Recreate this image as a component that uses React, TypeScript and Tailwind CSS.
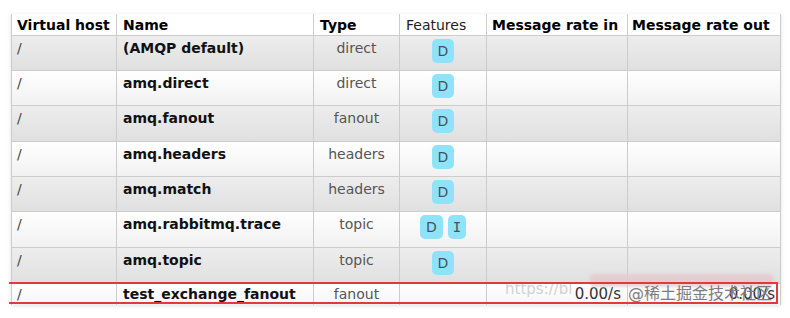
import React from "react";

type Exchange = {
  vhost: string;
  name: string;
  type: string;
  features: string[];
};

const exchanges: Exchange[] = [
  { vhost: "/", name: "(AMQP default)", type: "direct", features: ["D"] },
  { vhost: "/", name: "amq.direct", type: "direct", features: ["D"] },
  { vhost: "/", name: "amq.fanout", type: "fanout", features: ["D"] },
  { vhost: "/", name: "amq.headers", type: "headers", features: ["D"] },
  { vhost: "/", name: "amq.match", type: "headers", features: ["D"] },
  { vhost: "/", name: "amq.rabbitmq.trace", type: "topic", features: ["D", "I"] },
  { vhost: "/", name: "amq.topic", type: "topic", features: ["D"] },
];

// row heights taken from the screenshot (it is scaled a touch, so they drift 35/36)
const rowHeights = ["h-[35px]", "h-[35px]", "h-[36px]", "h-[35px]", "h-[35px]", "h-[36px]", "h-[36px]"];

const cols = "grid grid-cols-[105px_197px_86px_87px_141px_154px]";
const cell = "border-l border-[#cccccc] px-[6px]";

const Badge = ({ label }: { label: string }) => (
  <span
    className={`inline-block h-[24px] px-[5px] rounded-[5px] bg-[#8fe3f9] text-[#46525e] leading-[24px] text-[14px] ${
      label === "I" ? "font-['DejaVu_Sans_Mono',monospace]" : "px-[6px]"
    }`}
  >
    {label}
  </span>
);

export default function App() {
  return (
    <div className="relative w-[790px] h-[318px] overflow-hidden bg-white font-['DejaVu_Sans','Verdana',sans-serif] text-[14px]">
      <div className="ml-[11px] mt-[14px] w-[770px] h-[291px] overflow-hidden shadow-[0_1px_4px_rgba(0,0,0,0.12)]">
        {/* header */}
        <div className={`${cols} h-[22px] border-b border-[#cccccc] border-r bg-white leading-[17px]`}>
          <div className={`${cell} pl-[5px] pt-[3px] font-bold text-black`}>Virtual host</div>
          <div className={`${cell} pt-[3px] font-bold text-black`}>Name</div>
          <div className={`${cell} pt-[3px] font-bold text-black`}>Type</div>
          <div className={`${cell} pt-[3px] text-[#222]`}>Features</div>
          <div className={`${cell} pl-[5px] pt-[3px] font-bold text-black whitespace-nowrap`}>Message rate in</div>
          <div className={`${cell} pl-[4px] pt-[3px] font-bold text-black whitespace-nowrap`}>Message rate out</div>
        </div>

        {exchanges.map((ex, i) => (
          <div
            key={ex.name}
            className={`${cols} ${rowHeights[i]} border-b border-r border-[#cccccc] leading-[17px] ${
              i % 2 === 0
                ? "bg-linear-to-b from-[#ededed] to-[#e0e0e0]"
                : "bg-linear-to-b from-white to-[#f1f1f1]"
            }`}
          >
            <div className={`${cell} pl-[5px] pt-[4px] text-[#444]`}>{ex.vhost}</div>
            <div className={`${cell} pt-[4px] font-bold text-[#111]`}>{ex.name}</div>
            <div className={`${cell} pt-[4px] text-center text-[#555]`}>{ex.type}</div>
            <div className={`${cell} pt-[3px] flex justify-center gap-[5px]`}>
              {ex.features.map((f) => (
                <Badge key={f} label={f} />
              ))}
            </div>
            <div className={cell} />
            <div className={cell} />
          </div>
        ))}

        {/* new exchange, cut off at the bottom of the shot */}
        <div className={`${cols} h-[30px] border-r border-[#cccccc] leading-[17px] bg-linear-to-b from-white to-[#f1f1f1]`}>
          <div className={`${cell} pl-[5px] pt-[2px] text-[#444]`}>/</div>
          <div className={`${cell} pt-[2px] font-bold text-[#111]`}>test_exchange_fanout</div>
          <div className={`${cell} pt-[2px] text-center text-[#555]`}>fanout</div>
          <div className={cell} />
          <div className={`${cell} pt-[2px] text-right text-[15px] text-[#333]`}>0.00/s</div>
          <div className={`${cell} pt-[2px] text-right text-[15px] text-[#333]`}>0.00/s</div>
        </div>
      </div>

      {/* blurred mosaic + watermark */}
      <div className="absolute left-[590px] top-[274px] w-[183px] h-[13px] rounded-[4px] bg-[#e4c9cd] opacity-80 blur-[1.5px]" />
      <span className="absolute left-[505px] top-[278px] text-[15px] text-[#d2d2d2] whitespace-nowrap">https://bl</span>
      <span className="absolute left-[628px] top-[285px] text-[16px] leading-[18px] text-[#7d7d7d] whitespace-nowrap font-['DejaVu_Sans','Noto_Sans_CJK_SC',sans-serif]">
        @稀土掘金技术社区
      </span>

      {/* red annotation box */}
      <div className="absolute left-[9px] top-[282px] w-[769px] h-[22px] border-t-2 border-b-2 border-r-2 border-[#e2383e]" />
    </div>
  );
}
